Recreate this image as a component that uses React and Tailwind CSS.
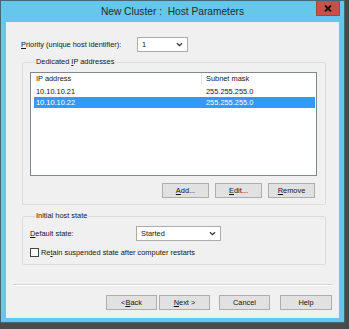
import { useState } from 'react';

const btn =
  'h-[15px] flex items-center justify-center border border-[#adadad] bg-[#e1e1e1] text-[#111]';

function Chevron() {
  return (
    <svg width="7" height="5" viewBox="0 0 7 5" className="shrink-0">
      <path d="M1 1.2 L3.5 3.6 L6 1.2" fill="none" stroke="#333" strokeWidth="1.3" />
    </svg>
  );
}

function Combo({ value, width }) {
  return (
    <div
      className={`${width} h-[15px] flex items-center justify-between pl-[4px] pr-[4px] bg-white border border-[#acacac]`}
    >
      <span>{value}</span>
      <Chevron />
    </div>
  );
}

function Key({ children }) {
  return <span className="underline underline-offset-[1px] decoration-[0.6px]">{children}</span>;
}

const rows = [
  { ip: '10.10.10.21', mask: '255.255.255.0' },
  { ip: '10.10.10.22', mask: '255.255.255.0' },
];

export default function App() {
  const [selected, setSelected] = useState(1);
  const [retain, setRetain] = useState(false);

  return (
    <div className="w-[349px] h-[329px] bg-[#4a4a4a] overflow-hidden font-['Liberation_Sans',Arial,sans-serif] text-[7.4px] leading-[10px] text-[#151515]">
      <div className="w-[345px] h-[323px] border border-[#3f6878] bg-[#65c7e9] flex flex-col">
        {/* title bar */}
        <div className="relative h-[21px] flex items-center justify-center">
          <span className="text-[10.2px] text-[#1f2d33] pt-[1px]">New Cluster :&nbsp; Host Parameters</span>
          <button className="absolute top-0 right-[4px] w-[24px] h-[15px] bg-[#c9504a] border border-[#a8443e] border-t-0 flex items-center justify-center">
            <svg width="8" height="7" viewBox="0 0 8 7">
              <path d="M1 0.5 L7 6.5 M7 0.5 L1 6.5" stroke="#111" strokeWidth="1.8" />
            </svg>
          </button>
        </div>

        {/* client area */}
        <div className="ml-[5px] w-[333px] h-[296px] bg-[#f0f0f0] shadow-[inset_0_0_0_1px_#e4f2f8] flex flex-col">
          <div className="mt-[15px] pl-[15px] flex items-center">
            <span className="w-[116px]">
              <Key>P</Key>riority (unique host identifier):
            </span>
            <Combo value="1" width="w-[51px]" />
          </div>

          <fieldset className="mt-[5px] ml-[16px] w-[304px] border border-[#dcdcdc] rounded-[2px] pl-[7px] pr-[8px] pb-[6px]">
            <legend className="ml-[5px] px-[1px]">
              Dedicated <Key>I</Key>P addresses
            </legend>
            <div className="mt-[5px] h-[104px] bg-white border border-[#828790]">
              <div className="h-[12px] flex items-center">
                <div className="w-[171px] pl-[5px] border-r border-[#e5e5e5] h-full flex items-center">IP address</div>
                <div className="pl-[4px]">Subnet mask</div>
              </div>
              <div className="pt-[1px]">
                {rows.map((r, i) => (
                  <div
                    key={r.ip}
                    onClick={() => setSelected(i)}
                    className={`h-[11px] ml-[3px] mr-[1px] flex items-center ${
                      selected === i ? 'bg-[#3399ff] text-white' : ''
                    }`}
                  >
                    <div className="w-[168px] pl-[2px]">{r.ip}</div>
                    <div className="pl-[4px]">{r.mask}</div>
                  </div>
                ))}
              </div>
            </div>
            <div className="mt-[7px] pr-[2px] flex justify-end gap-[6px]">
              <button className={`${btn} w-[47px] border-[#3c8fd6]`}>
                <Key>A</Key>dd...
              </button>
              <button className={`${btn} w-[47px]`}>
                <Key>E</Key>dit...
              </button>
              <button className={`${btn} w-[47px]`}>
                <Key>R</Key>emove
              </button>
            </div>
          </fieldset>

          <fieldset className="mt-[6px] ml-[16px] w-[304px] border border-[#dcdcdc] rounded-[2px] pl-[7px] pr-[8px] pb-[6px]">
            <legend className="ml-[5px] px-[1px]">Initial host state</legend>
            <div className="mt-[5px] flex items-center">
              <span className="w-[106px]">
                <Key>D</Key>efault state:
              </span>
              <Combo value="Started" width="w-[85px]" />
            </div>
            <label className="mt-[6px] h-[11px] flex items-center gap-[2px]" onClick={() => setRetain(!retain)}>
              <span className="w-[9px] h-[9px] bg-white border border-[#444] flex items-center justify-center">
                {retain && (
                  <svg width="7" height="7" viewBox="0 0 7 7">
                    <path d="M1 3.5 L3 5.5 L6 1.5" fill="none" stroke="#111" strokeWidth="1.2" />
                  </svg>
                )}
              </span>
              <span>
                Re<Key>t</Key>ain suspended state after computer restarts
              </span>
            </label>
          </fieldset>

          <div className="mt-[19px] ml-[7px] w-[319px] h-[2px] border-t border-[#d5d5d5] border-b border-b-white" />

          <div className="mt-[9px] pr-[7px] flex justify-end">
            <button className={`${btn} w-[51px]`}>
              {'< '}
              <Key>B</Key>ack
            </button>
            <button className={`${btn} w-[51px] ml-[2px]`}>
              <Key>N</Key>
              {'ext >'}
            </button>
            <button className={`${btn} w-[51px] ml-[9px]`}>Cancel</button>
            <button className={`${btn} w-[52px] ml-[10px]`}>Help</button>
          </div>
        </div>
      </div>
    </div>
  );
}
